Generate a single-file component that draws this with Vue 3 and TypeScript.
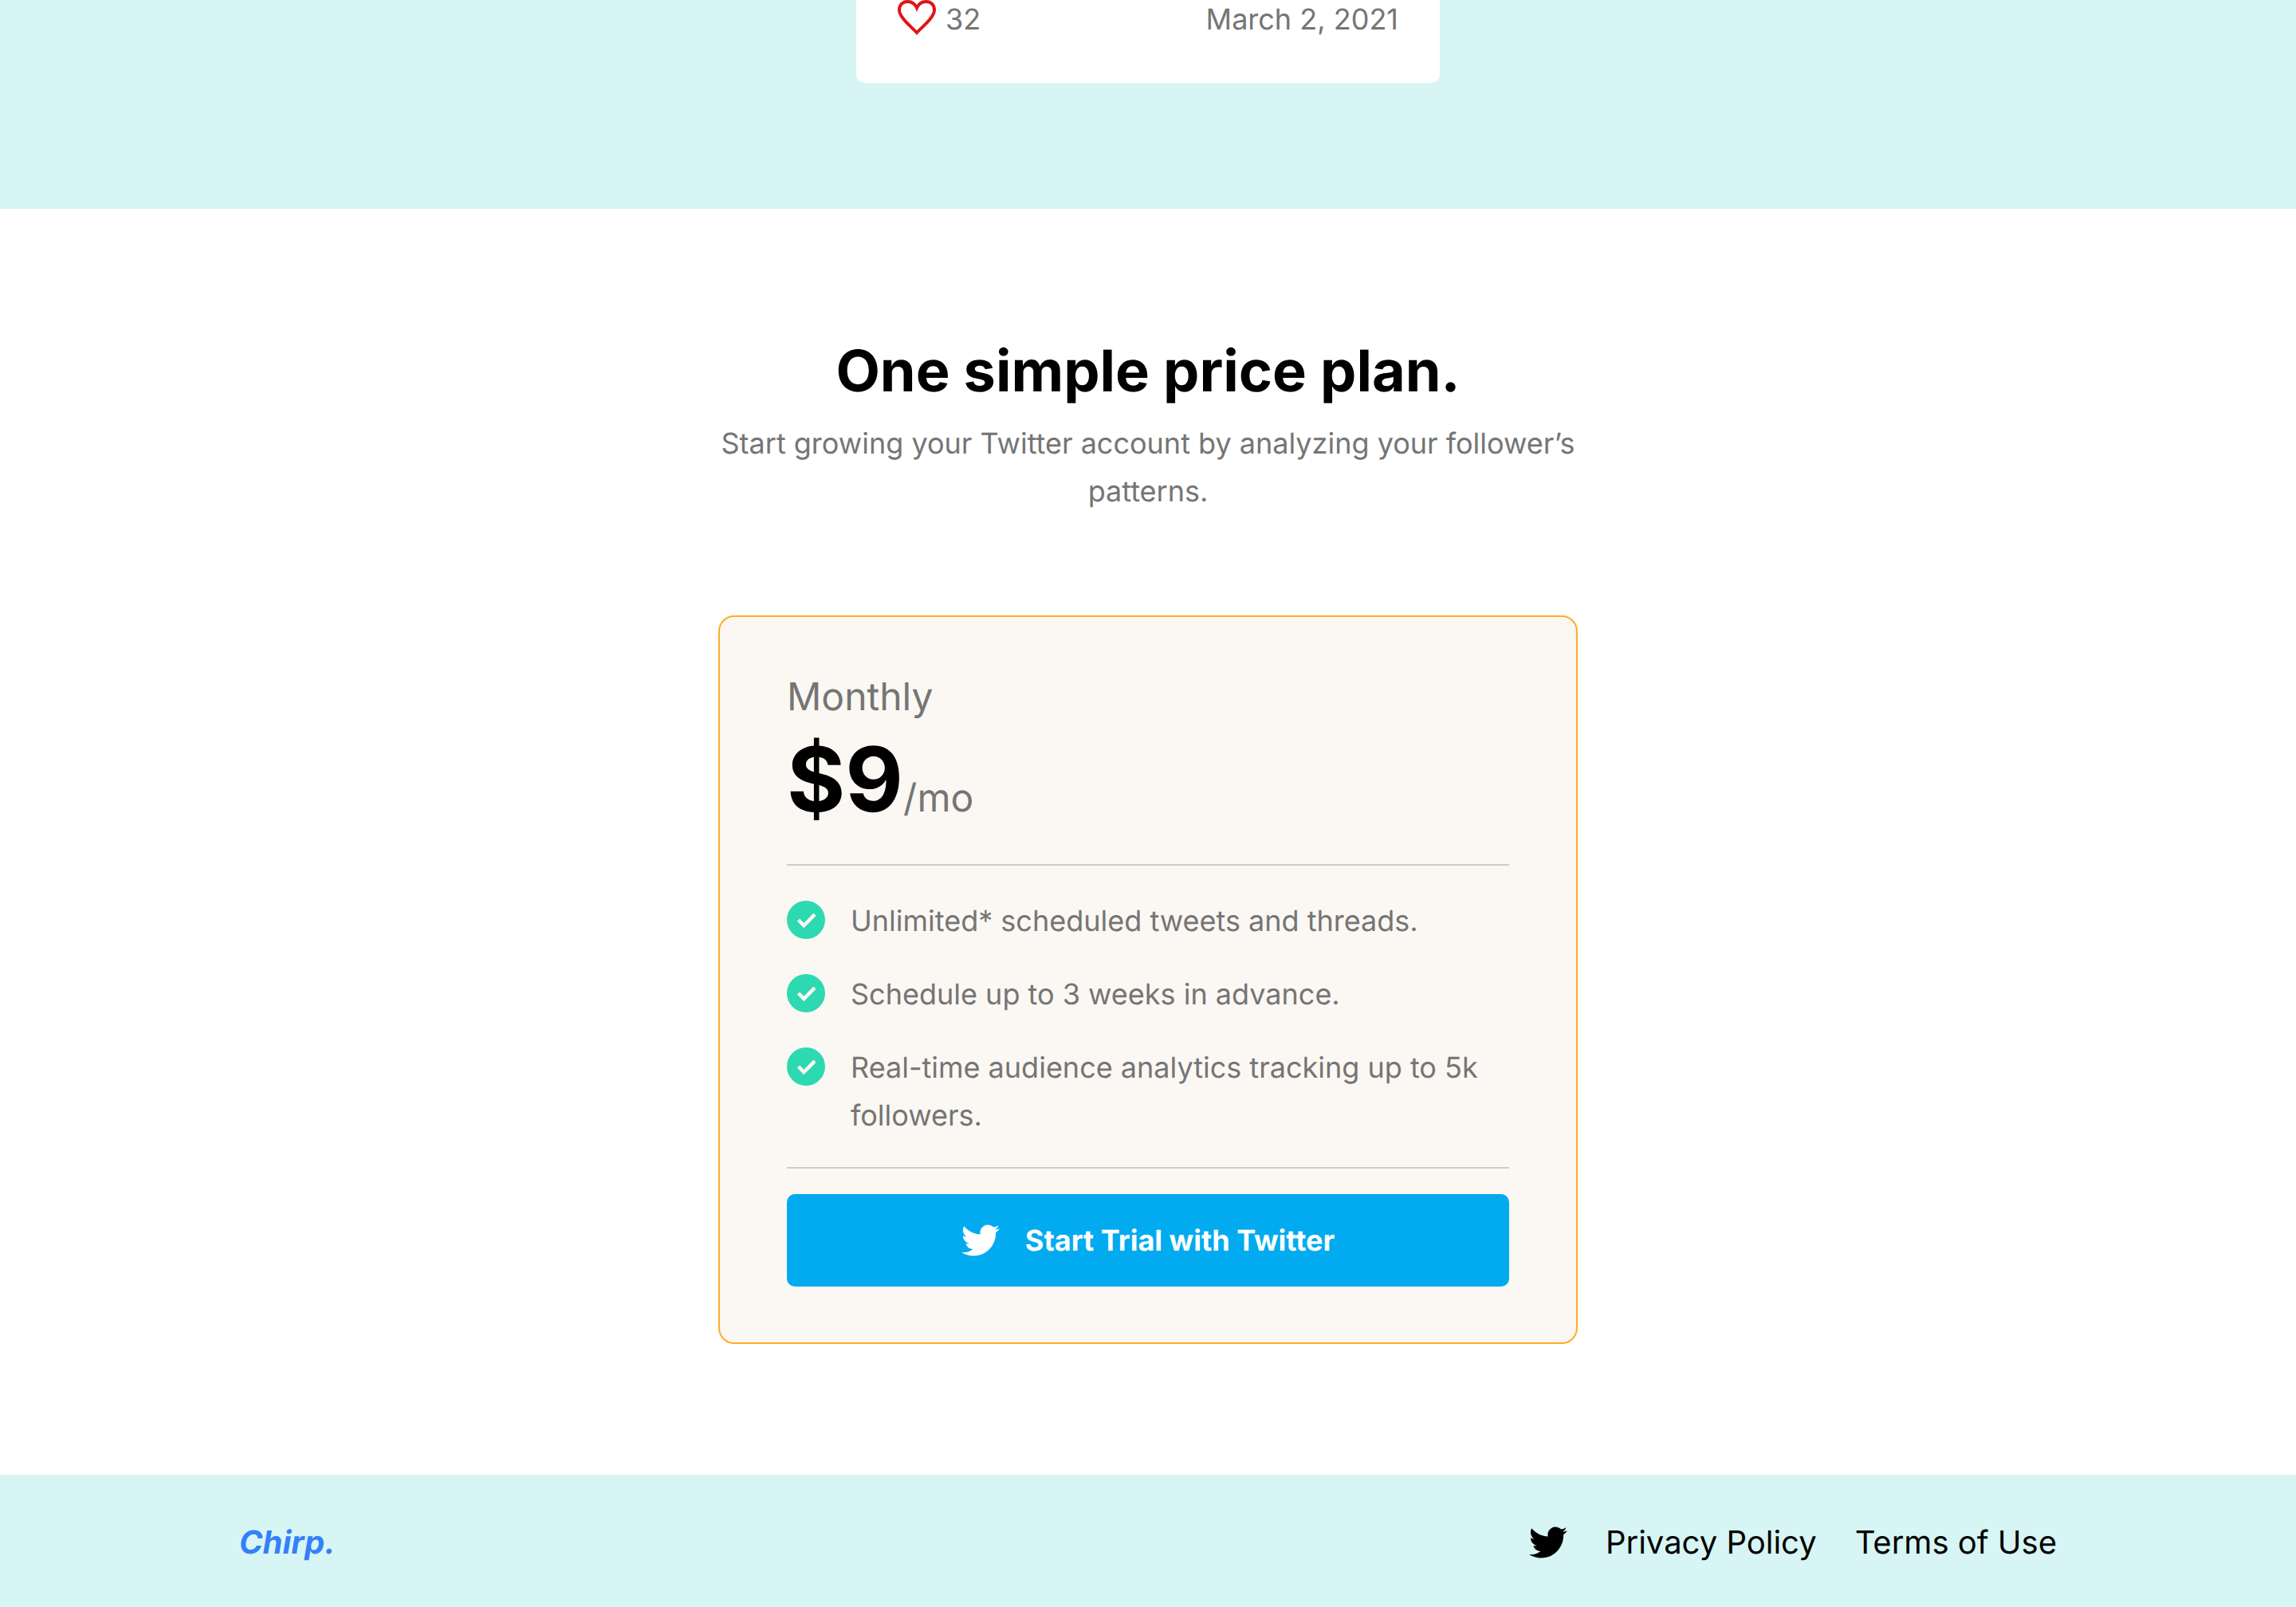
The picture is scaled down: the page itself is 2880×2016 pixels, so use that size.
<script setup lang="ts">
interface FooterLink {
  label: string
  href: string
}

const likes = 32
const postedOn = 'March 2, 2021'

const features: string[] = [
  'Unlimited* scheduled tweets and threads.',
  'Schedule up to 3 weeks in advance.',
  'Real-time audience analytics tracking up to 5k followers.',
]

const footerLinks: FooterLink[] = [
  { label: 'Privacy Policy', href: '#privacy' },
  { label: 'Terms of Use', href: '#terms' },
]

const birdPath =
  'M23.953 4.57a10 10 0 01-2.825.775 4.958 4.958 0 002.163-2.723c-.951.555-2.005.959-3.127 1.184a4.92 4.92 0 00-8.384 4.482C7.69 8.095 4.067 6.13 1.64 3.162a4.822 4.822 0 00-.666 2.475c0 1.71.87 3.213 2.188 4.096a4.904 4.904 0 01-2.228-.616v.06a4.923 4.923 0 003.946 4.827 4.996 4.996 0 01-2.212.085 4.936 4.936 0 004.604 3.417 9.867 9.867 0 01-6.102 2.105c-.39 0-.779-.023-1.17-.067a13.995 13.995 0 007.557 2.209c9.053 0 13.998-7.496 13.998-13.985 0-.21 0-.42-.015-.63A9.935 9.935 0 0024 4.59z'
</script>

<template>
  <div class="page">
    <section class="tweets">
      <article class="tweet">
        <span class="likes">
          <svg class="icon" viewBox="0 0 48 48" aria-hidden="true">
            <path
              d="M24 41C18 34.500 12 30 7 23.500C3.500 19 2 16.500 2 12.500C2 6 6.500 2 12.500 2C18 2 22 5.500 24 10C26 5.500 30 2 35.500 2C41.500 2 46 6 46 12.500C46 16.500 44.500 19 41 23.500C36 30 30 34.500 24 41Z"
              fill="none"
              stroke="#e01515"
              stroke-width="4"
            />
          </svg>
          {{ likes }}
        </span>
        <time datetime="2021-03-02">{{ postedOn }}</time>
      </article>
    </section>

    <main class="pricing">
      <h2 class="title">One simple price plan.</h2>
      <p class="lead">Start growing your Twitter account by analyzing your follower’s patterns.</p>

      <div class="plan">
        <h3 class="period">Monthly</h3>
        <p class="price"><strong>$9</strong>/mo</p>
        <ul class="features">
          <li v-for="feature in features" :key="feature">
            <svg class="icon" viewBox="0 0 48 48" aria-hidden="true">
              <circle cx="24" cy="24" r="24" fill="#2dd9b0" />
              <path d="M14.500 24L21.300 31L35 17.200" fill="none" stroke="#fbf8f3" stroke-width="4.500" />
            </svg>
            <span>{{ feature }}</span>
          </li>
        </ul>
        <button class="trial" type="button">
          <svg class="icon" viewBox="0 0 24 24" aria-hidden="true"><path :d="birdPath" fill="currentColor" /></svg>
          Start Trial with Twitter
        </button>
      </div>
    </main>

    <footer class="footer">
      <a class="brand" href="#top">Chirp.</a>
      <nav class="links" aria-label="Footer">
        <a href="#twitter" aria-label="Twitter">
          <svg class="icon" viewBox="0 0 24 24" aria-hidden="true"><path :d="birdPath" fill="currentColor" /></svg>
        </a>
        <a v-for="link in footerLinks" :key="link.label" :href="link.href">{{ link.label }}</a>
      </nav>
    </footer>
  </div>
</template>

<style>
body {
  margin: 0;
  background: #fff;
}
</style>

<style scoped>
.page {
  min-height: 100vh;
  display: flex;
  flex-direction: column;
  font-family: Inter, "Liberation Sans", sans-serif;
  font-size: 36px;
  line-height: 60px;
  text-rendering: geometricPrecision;
  color: #757575;
}

h2,
h3,
p,
ul {
  margin: 0;
  padding: 0;
}

a {
  color: inherit;
  text-decoration: none;
}

.icon {
  display: block;
  width: 48px;
  height: 48px;
  flex: none;
}

.tweets {
  padding-bottom: 158px;
  background: #d7f5f4;
}

.tweet {
  box-sizing: border-box;
  max-width: 732px;
  margin: 0 auto;
  padding: 0 52px 56px;
  display: flex;
  justify-content: space-between;
  align-items: flex-start;
  line-height: 48px;
  background: #fff;
  border-radius: 0 0 10px 10px;
}

.likes {
  display: flex;
  align-items: center;
  gap: 12px;
}

.pricing {
  box-sizing: border-box;
  width: 100%;
  max-width: 1078px;
  margin: 0 auto;
  padding: 160px 0 164px;
}

.title {
  margin-bottom: 16px;
  font-size: 72px;
  line-height: 88px;
  font-weight: 700;
  text-align: center;
  color: #000;
}

.lead {
  margin-bottom: 126px;
  text-align: center;
}

.plan {
  padding: 70px 84px;
  background: #fbf8f3;
  border: 2px solid #ffac26;
  border-radius: 20px;
}

.period {
  font-size: 48px;
  font-weight: 400;
}

.price {
  font-size: 48px;
}

.price strong {
  font-size: 112px;
  line-height: 148px;
  font-weight: 700;
  color: #000;
}

.features {
  margin: 32px 0;
  padding: 39px 0 35px;
  display: flex;
  flex-direction: column;
  gap: 32px;
  list-style: none;
  border-top: 2px solid #ccc;
  border-bottom: 2px solid #ccc;
}

.features li {
  display: flex;
  gap: 32px;
}

.features .icon {
  margin-top: 5px;
}

.trial {
  width: 100%;
  height: 116px;
  padding: 0;
  display: flex;
  align-items: center;
  justify-content: center;
  gap: 32px;
  font: inherit;
  font-weight: 700;
  text-rendering: inherit;
  color: #fff;
  background: #02abef;
  border: 0;
  border-radius: 10px;
}

.footer {
  flex: 1;
  box-sizing: border-box;
  width: 100%;
  padding: 55px 300px 50px;
  display: flex;
  align-items: flex-start;
  justify-content: space-between;
  font-size: 40px;
  background: #d7f5f4;
}

.brand {
  font-weight: 700;
  font-style: italic;
  color: #3380fa;
}

.links {
  display: flex;
  align-items: center;
  gap: 48px;
  color: #000;
}
</style>
